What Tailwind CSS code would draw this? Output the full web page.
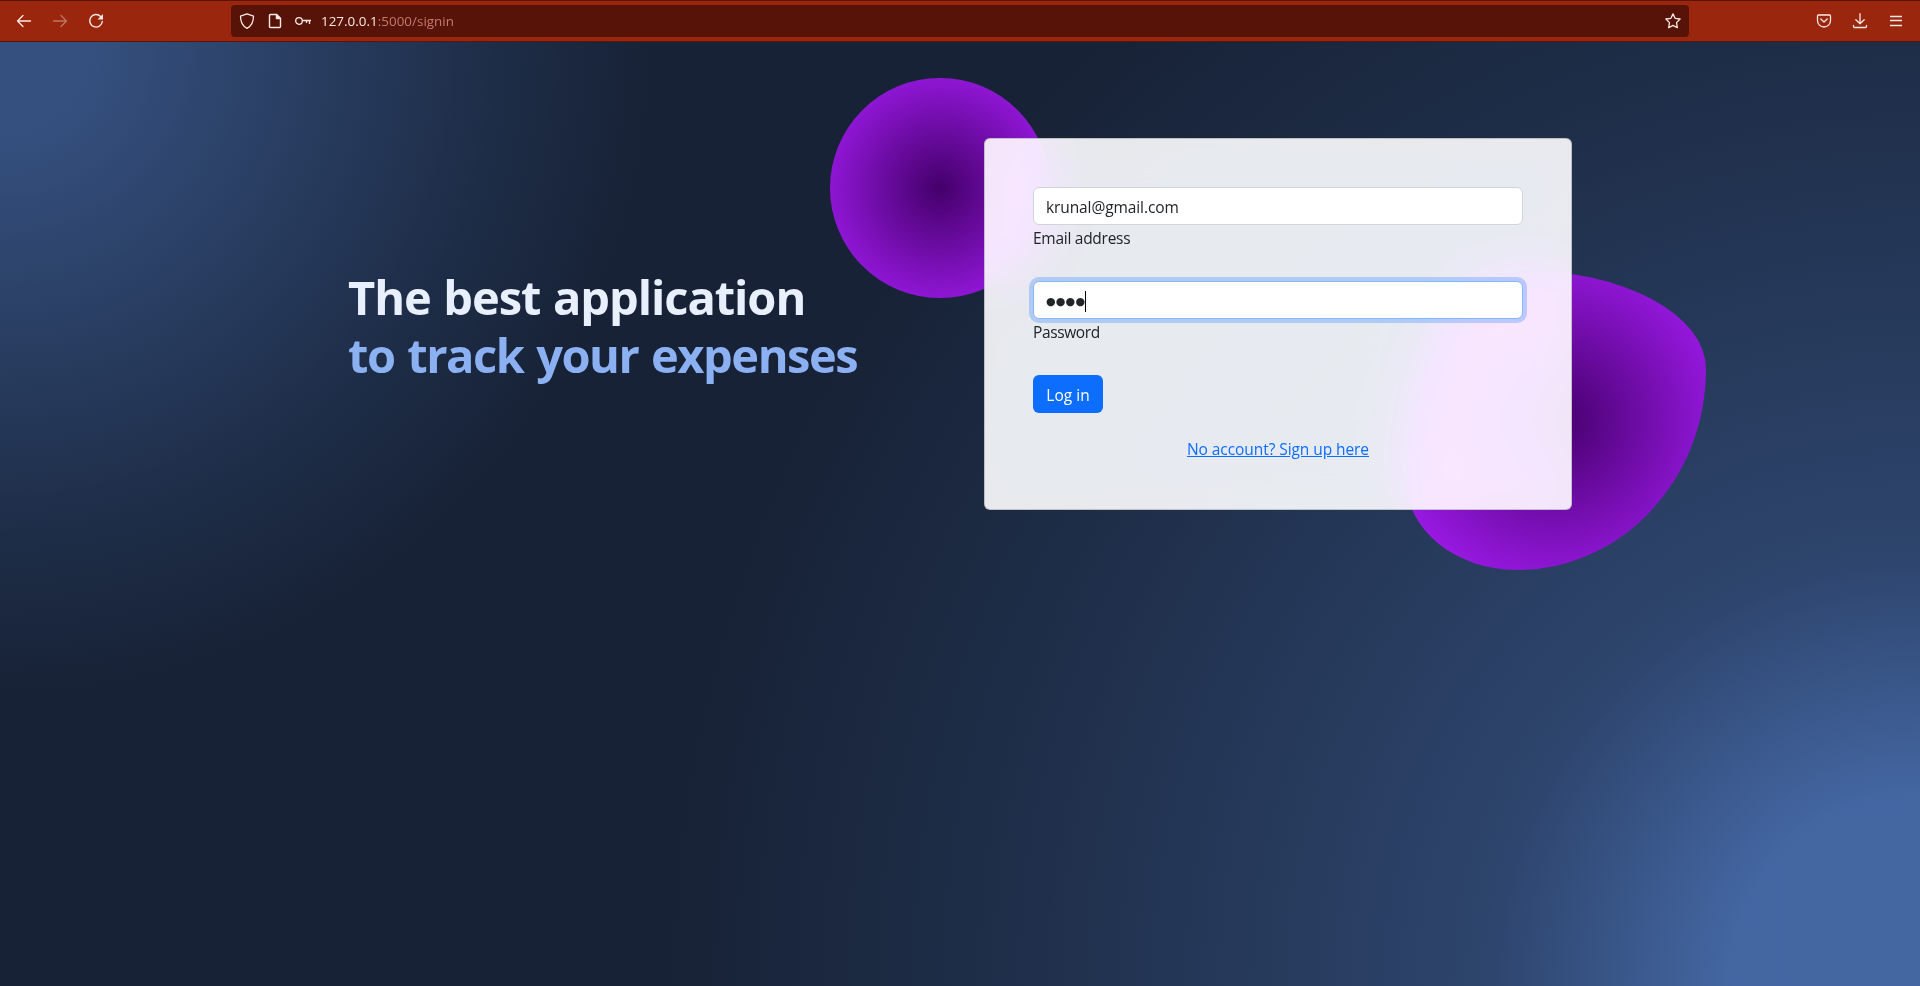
<!DOCTYPE html>
<html lang="en">
<head>
<meta charset="utf-8">
<title>Sign in</title>
<script src="https://cdn.jsdelivr.net/npm/@tailwindcss/browser@4"></script>
</head>
<body class="flex h-screen w-full flex-col overflow-hidden font-['Open_Sans',sans-serif] text-[15.5px] leading-6 text-[#212529]">
<header class="flex h-[42px] shrink-0 items-center border-y border-t-[#5c1408] border-b-[#5c1408] bg-[#99260d] text-[#fbe9e5]">
  <div class="flex w-[231px] items-center gap-5 pl-4">
    <svg class="size-4" viewBox="0 0 16 16" fill="none" stroke="currentColor" stroke-width="1.3" stroke-linecap="round" stroke-linejoin="round"><path d="M14.5 8H1.5M7 2.5L1.5 8L7 13.5"/></svg>
    <svg class="size-4 opacity-40" viewBox="0 0 16 16" fill="none" stroke="currentColor" stroke-width="1.3" stroke-linecap="round" stroke-linejoin="round"><path d="M1.5 8H14.5M9 2.5L14.5 8L9 13.5"/></svg>
    <svg class="size-4" viewBox="0 0 16 16" fill="none" stroke="currentColor" stroke-width="1.4" stroke-linecap="round"><path d="M12.6 3.4A6.3 6.3 0 1 0 14.3 8.5"/><path d="M15 1V6.5H9.5z" fill="currentColor" stroke="none"/></svg>
  </div>
  <div class="flex h-8 w-[1458px] items-center rounded bg-[#571308] px-2">
    <svg class="size-4" viewBox="0 0 16 16" fill="none" stroke="currentColor" stroke-width="1.3" stroke-linejoin="round"><path d="M8 .8L14.5 3.2C14.5 9 12.5 13 8 15.3C3.5 13 1.5 9 1.5 3.2z"/></svg>
    <svg class="ml-3 size-4" viewBox="0 0 16 16" fill="none" stroke="currentColor" stroke-width="1.4" stroke-linejoin="round"><path d="M3.5 1.5H9.5L13.5 5.5V13.5Q13.5 14.5 12.5 14.5H3.5Q2.5 14.5 2.5 13.5V2.5Q2.5 1.5 3.5 1.5z"/><path d="M9.5 1.5V5.5H13.5z" fill="currentColor"/></svg>
    <svg class="ml-3 size-4" viewBox="0 0 16 16" fill="none" stroke="currentColor" stroke-width="1.3"><circle cx="4" cy="8" r="3.3"/><path d="M7.3 7.5H16M14.5 7.5V11M11.5 7.5V10"/></svg>
    <div class="pl-2.5 text-[13.4px] tracking-[0.03px]"><span>127.0.0.1</span><span class="text-[#c47a6c]">:5000/signin</span></div>
    <svg class="ml-auto size-4" viewBox="0 0 16 16" fill="none" stroke="currentColor" stroke-width="1.3" stroke-linejoin="round"><path d="M8 .9L10.1 5.3L15.1 6L11.5 9.6L12.3 14.7L8 12.4L3.7 14.7L4.5 9.6L.9 6L5.9 5.3z"/></svg>
  </div>
  <div class="flex flex-1 items-center justify-end gap-5 pr-4">
    <svg class="size-4" viewBox="0 0 16 16" fill="none" stroke="currentColor" stroke-width="1.3" stroke-linecap="round" stroke-linejoin="round"><path d="M2.500 2H13.500Q14.500 2 14.500 3V7.500A6.500 6.500 0 0 1 1.500 7.500V3Q1.500 2 2.500 2z"/><path d="M4.800 6L8 9L11.200 6"/></svg>
    <svg class="size-4" viewBox="0 0 16 16" fill="none" stroke="currentColor" stroke-width="1.3" stroke-linecap="round" stroke-linejoin="round"><path d="M8 .7V10.500M3.800 6.700L8 10.700L12.200 6.700M1.500 12.500V13.500Q1.500 14.500 2.500 14.500H13.500Q14.500 14.500 14.500 13.500V12.500"/></svg>
    <svg class="size-4" viewBox="0 0 16 16" fill="none" stroke="currentColor" stroke-width="1.3"><path d="M2 3.500H14M2 7.500H14M2 12.500H14"/></svg>
  </div>
</header>
<main class="flex-1 bg-[hsl(218,41%,15%)] bg-[radial-gradient(650px_circle_at_0%_0%,hsl(218,41%,35%)_15%,hsl(218,41%,30%)_35%,hsl(218,41%,20%)_75%,hsl(218,41%,19%)_80%,transparent_100%),radial-gradient(1250px_circle_at_100%_100%,hsl(218,41%,45%)_15%,hsl(218,41%,30%)_35%,hsl(218,41%,20%)_75%,hsl(218,41%,19%)_80%,transparent_100%)] pt-24">
  <div class="mx-auto grid w-[1272px] grid-cols-2 items-center">
    <h1 class="px-6 pt-[5px] text-[47px] leading-[57.6px] font-bold whitespace-nowrap text-[hsl(218,81%,95%)]"><span class="tracking-[-1.06px] [word-spacing:1.5px]">The best application</span><br><span class="tracking-[-1.47px] [word-spacing:2px] text-[hsl(218,81%,75%)]">to track your expenses</span></h1>
    <div class="relative px-6">
      <div class="absolute -top-[60px] -left-[130px] size-[220px] rounded-full bg-[radial-gradient(#44006b,#ad1fff)]"></div>
      <div class="absolute -right-[110px] -bottom-[60px] size-[300px] rounded-[38%_62%_63%_37%/70%_33%_67%_30%] bg-[radial-gradient(#44006b,#ad1fff)]"></div>
      <div class="relative flex h-[372px] flex-col items-start rounded-md border border-black/18 bg-white/90 p-12 backdrop-blur-[25px] backdrop-saturate-200">
        <div class="flex h-[38px] w-full shrink-0 items-center rounded-md border border-[#ced4da] bg-white px-3 pt-0.5"><span class="tracking-[-0.1px]">krunal@gmail.com</span></div>
        <label class="mb-[31px] pt-px tracking-[-0.27px]">Email address</label>
        <div class="flex h-[38px] w-full shrink-0 items-center rounded-md border border-[#86b7fe] bg-white px-3 ring-4 ring-[#0d6efd]/25"><span class="pt-[3px] font-['DejaVu_Sans'] text-[11px] tracking-[0.2px]">●●●●</span><span class="mt-0.5 h-[21px] w-px bg-black"></span></div>
        <label class="mb-[31px] pt-px tracking-[-0.38px]">Password</label>
        <button class="mb-6 h-[38px] w-[70px] shrink-0 rounded-md bg-[#0d6efd] pt-0.5 text-white"><span>Log in</span></button>
        <a class="self-center pt-px leading-[23px] tracking-[-0.07px] text-[#0d6efd] underline">No account? Sign up here</a>
      </div>
    </div>
  </div>
</main>
</body>
</html>
